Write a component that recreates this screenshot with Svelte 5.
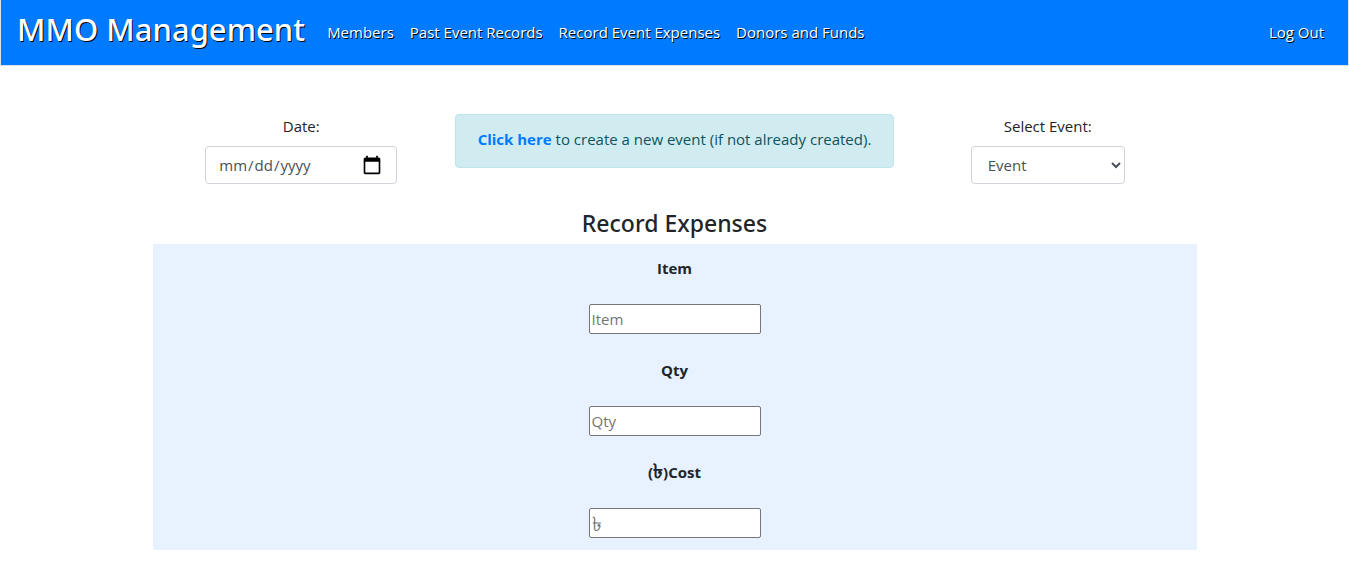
<script>
  const links = ['Members', 'Past Event Records', 'Record Event Expenses', 'Donors and Funds'];
  const fields = [
    { id: 'item', label: 'Item', placeholder: 'Item' },
    { id: 'qty', label: 'Qty', placeholder: 'Qty' },
    { id: 'cost', currency: '৳', label: 'Cost', placeholder: '৳' }
  ];
</script>

<header class="navbar">
  <a class="brand" href="#home">MMO Management</a>
  <nav>
    {#each links as link}
      <a href="#{link}">{link}</a>
    {/each}
    <a class="logout" href="#logout">Log Out</a>
  </nav>
</header>

<main>
  <section class="top">
    <div class="picker">
      <label for="date">Date:</label>
      <input id="date" class="control date" type="date" />
    </div>
    <p class="alert"><a href="#create">Click here</a> to create a new event (if not already created).</p>
    <div class="picker">
      <label for="event">Select Event:</label>
      <select id="event" class="control event"><option>Event</option></select>
    </div>
  </section>

  <h1>Record Expenses</h1>
  <form class="expenses">
    {#each fields as field}
      <div class="field">
        <label for={field.id}>{#if field.currency}(<span class="currency">{field.currency}</span>){/if}{field.label}</label>
        <input id={field.id} class:money={field.currency} type="text" placeholder={field.placeholder} />
      </div>
    {/each}
  </form>
</main>

<style>
  :global(body) {
    color: #212529;
    background: #fff;
    font-family: "Open Sans", "Noto Sans", sans-serif;
    font-size: 15px;
    line-height: 24px;
  }
  a { text-decoration: none; }
  input, select { box-sizing: border-box; font-family: inherit; font-size: 15px; }
  .navbar {
    display: flex;
    align-items: center;
    padding: 8px 16px 9px;
    border: 1px solid #dee2e6;
    border-top: 0;
    background: #007bff;
  }
  .navbar a { color: #fff; text-shadow: 1px 1px #000; }
  .navbar .brand {
    margin: 0 14px 6px 0;
    font-family: "Noto Sans", "Open Sans", sans-serif;
    font-size: 31px;
    font-weight: 500;
    line-height: 42px;
    white-space: nowrap;
  }
  nav { display: flex; flex: 1; }
  nav a { padding: 8px; white-space: nowrap; }
  .logout { margin-left: auto; }
  main {
    max-width: 1044px;
    margin: 48px auto 18px;
    text-align: center;
  }
  .top {
    display: grid;
    grid-template-columns: 1fr 439px 1fr;
    align-items: start;
    column-gap: 5px;
  }
  .picker { display: flex; flex-direction: column; align-items: center; gap: 8px; }
  .control {
    height: 38px;
    border: 1px solid #ced4da;
    border-radius: 4px;
    background: #fff;
    color: #495057;
  }
  .date { width: 192px; padding: 6px 12px; }
  .date::-webkit-calendar-picker-indicator { width: 20px; height: 20px; background-size: 20px 20px; }
  .event { width: 154px; padding: 6px 0 6px 12px; }
  .alert {
    margin: 0;
    padding: 12px 16px 16px;
    border: 1px solid #bee5eb;
    border-radius: 4px;
    background: #d1ecf1;
    color: #0c5460;
  }
  .alert a { color: #007bff; font-weight: 700; }
  h1 {
    margin: 24px 0 5px;
    font-family: "Noto Sans", "Open Sans", sans-serif;
    font-size: 23px;
    font-weight: 500;
    line-height: 31px;
  }
  .expenses { background: #e7f1ff; }
  .field {
    display: flex;
    flex-direction: column;
    align-items: center;
    gap: 24px;
    padding: 12px;
  }
  .field label { font-weight: 700; }
  .currency { font-size: 20px; line-height: 16px; }
  .field input {
    width: 172px;
    height: 30px;
    padding: 1px 2px;
    border: 1px solid #767676;
    border-radius: 2px;
    background: #fff;
  }
  .field input::placeholder { color: #757575; }
  .field .money { font-size: 20px; }
</style>
